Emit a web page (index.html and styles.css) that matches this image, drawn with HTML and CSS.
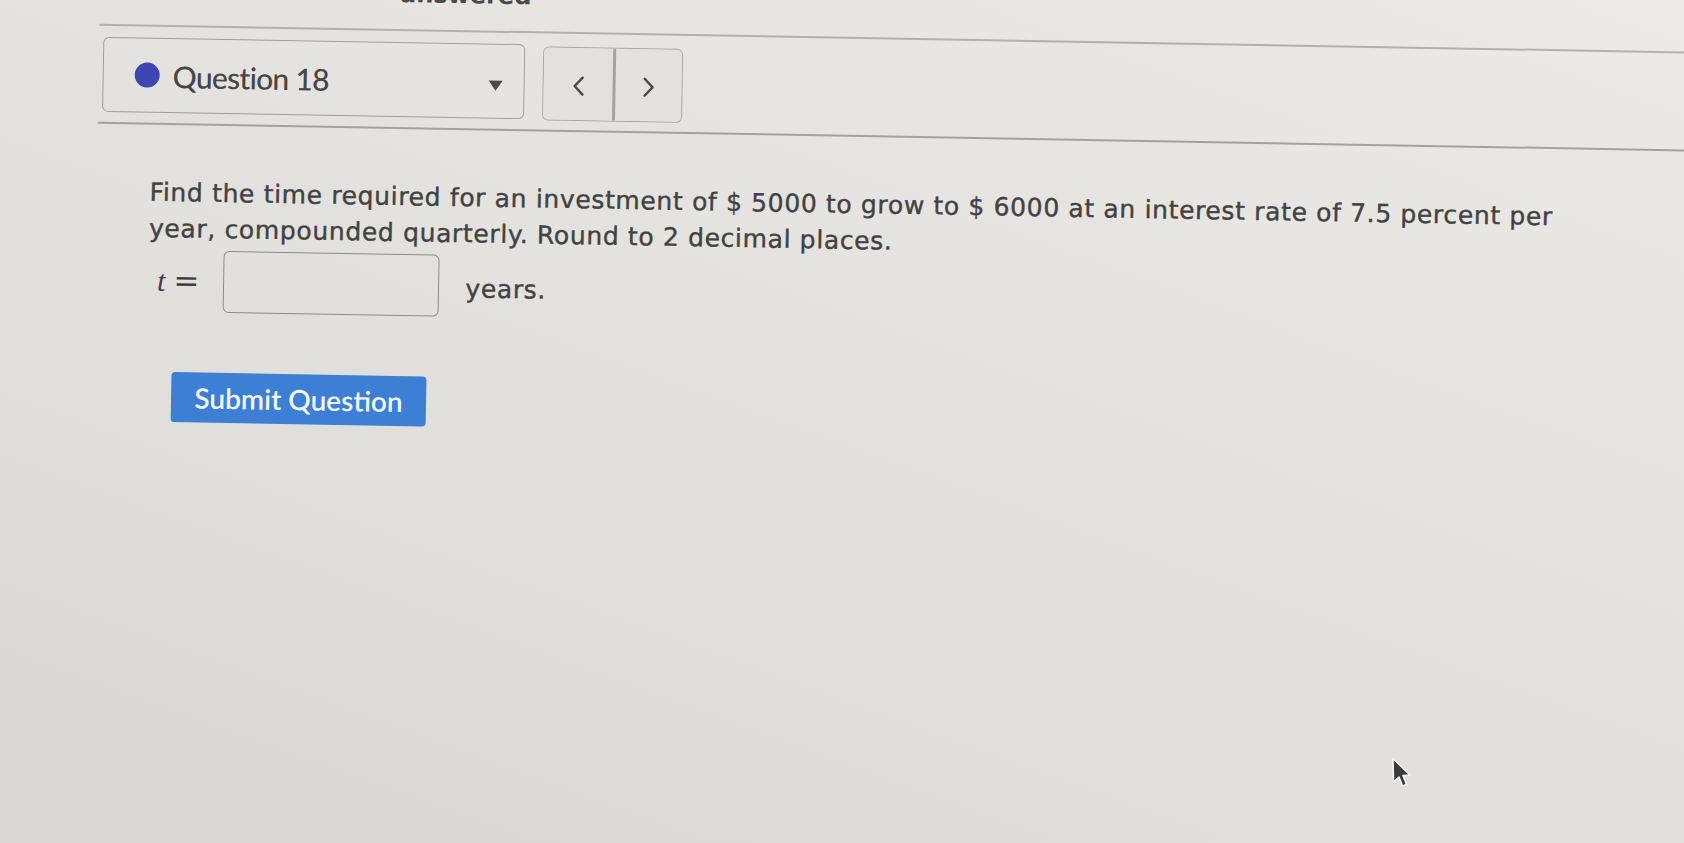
FILE: index.html
```html
<!DOCTYPE html>
<html lang="en">
<head>
<meta charset="utf-8">
<title>Question 18</title>
<link rel="stylesheet" href="styles.css">
</head>
<body>
<div class="page">
  <div class="status">answered</div>
  <div class="rule rule-top"></div>
  <div class="qbar">
    <div class="dropdown">
      <span class="dot"></span>
      <span class="qtitle">Question 18</span>
      <span class="caret"></span>
    </div>
    <div class="nav">
      <button class="navbtn" type="button" aria-label="Previous">
        <svg width="14" height="22" viewBox="0 0 14 22"><path d="M11 2.5 L3 11 L11 19.5" fill="none" stroke="#4a4a4a" stroke-width="2.4" stroke-linecap="round" stroke-linejoin="round"/></svg>
      </button>
      <button class="navbtn navbtn-next" type="button" aria-label="Next">
        <svg width="14" height="22" viewBox="0 0 14 22"><path d="M3 2.5 L11 11 L3 19.5" fill="none" stroke="#4a4a4a" stroke-width="2.4" stroke-linecap="round" stroke-linejoin="round"/></svg>
      </button>
    </div>
  </div>
  <div class="rule rule-bottom"></div>

  <div class="question">
    <p class="qtext">Find the time required for an investment of $ 5000 to grow to $ 6000 at an interest rate of 7.5 percent per year, compounded quarterly. Round to 2 decimal places.</p>
    <div class="answer">
      <span class="math"><span class="mi">t</span><span class="mo">=</span></span>
      <input class="ans-input" type="text" aria-label="t">
      <span class="unit">years.</span>
    </div>
    <button class="submit" type="button">Submit Question</button>
  </div>
</div>
<svg class="cursor" width="22" height="32" viewBox="0 0 22 32"><path d="M2 1.5 L2.5 25 L8 20 L11.5 29 L15.5 27.5 L12 18.5 L19 18 Z" fill="#3b3b3b" stroke="#f4f4f2" stroke-width="1.6" stroke-linejoin="round"/></svg>
</body>
</html>
```

FILE: styles.css
```css
html, body {
  margin: 0;
  padding: 0;
}

body {
  width: 1684px;
  height: 843px;
  overflow: hidden;
  position: relative;
  background: linear-gradient(200deg, #ebeae6 0%, #e3e2de 45%, #d8d7d3 100%);
  font-family: "DejaVu Sans", Verdana, sans-serif;
  color: #444444;
}

.page {
  transform: rotate(1deg);
  transform-origin: 0 0;
  padding: 22px 0 0 100px;
  width: 1640px;
}

.status {
  height: 24px;
  margin: -47px 0 23px 300px;
  font-size: 24px;
  line-height: 24px;
  font-weight: 700;
  color: #4a4a4a;
}

.rule {
  height: 2px;
  margin-right: -80px;
}

.rule-top {
  background: #b2b1ae;
}

.rule-bottom {
  margin-top: 9px;
  background: #a3a29f;
}

.qbar {
  display: flex;
  align-items: flex-start;
  gap: 18px;
  margin-top: 11px;
  padding-left: 4px;
}

.dropdown {
  box-sizing: border-box;
  width: 422px;
  height: 75px;
  border: 1.5px solid #a09f9c;
  border-radius: 6px;
  display: flex;
  align-items: center;
  padding: 0 21px 0 31px;
}

.dot {
  width: 25px;
  height: 25px;
  border-radius: 50%;
  background: #3e46b2;
  margin-right: 13px;
  flex: none;
}

.qtitle {
  flex: 1;
  font-family: Lato, "DejaVu Sans", sans-serif;
  font-size: 30px;
  font-weight: 500;
  color: #464646;
  letter-spacing: -0.7px;
}

.caret {
  width: 0;
  height: 0;
  border-left: 7.5px solid transparent;
  border-right: 7.5px solid transparent;
  border-top: 10px solid #4a4a4a;
  margin-top: 9px;
}

.nav {
  display: flex;
  height: 74px;
  box-sizing: border-box;
  margin-top: 2px;
  border: 1.5px solid #a9a8a5;
  border-radius: 6px;
  overflow: hidden;
}

.navbtn {
  width: 69px;
  height: 100%;
  border: none;
  background: #e2e1dd;
  display: flex;
  align-items: center;
  justify-content: center;
  padding: 0;
  margin: 0;
}

.navbtn svg {
  margin-top: 4px;
}

.navbtn-next {
  border-left: 3px solid #a5a4a1;
}

.question {
  padding-left: 53px;
  margin-top: 50px;
}

.qtext {
  margin: 0;
  width: 1450px;
  font-size: 25px;
  line-height: 36px;
  letter-spacing: 0.65px;
  color: #424242;
  -webkit-text-stroke: 0.4px #424242;
}

.answer {
  display: flex;
  align-items: flex-start;
  margin-top: 3px;
}

.math {
  color: #3f3f3f;
  padding-left: 9px;
  margin-top: 12px;
  line-height: 36px;
  display: flex;
  align-items: baseline;
}

.mi {
  font-family: "Liberation Serif", "DejaVu Serif", serif;
  font-style: italic;
  font-size: 30px;
}

.mo {
  font-family: "DejaVu Serif", "Liberation Serif", serif;
  font-size: 31px;
  font-weight: 300;
  margin-left: 8px;
}

.ans-input {
  box-sizing: border-box;
  width: 216px;
  height: 62px;
  margin: 0 0 0 24px;
  border: 1.5px solid #8e8d8a;
  border-radius: 6px;
  background: transparent;
  outline: none;
}

.unit {
  margin-left: 26px;
  margin-top: 16px;
  font-size: 25px;
  line-height: 36px;
  letter-spacing: 0.65px;
  color: #424242;
  -webkit-text-stroke: 0.4px #424242;
}

.submit {
  display: block;
  margin: 60px 0 0 25px;
  width: 255px;
  height: 50px;
  border: none;
  border-radius: 4px;
  background: #3c7fd5;
  color: #f2f6fb;
  font-family: Lato, "DejaVu Sans", sans-serif;
  font-size: 28px;
  font-weight: 600;
  padding: 0;
}

.cursor {
  position: absolute;
  left: 1391px;
  top: 757px;
}
```
